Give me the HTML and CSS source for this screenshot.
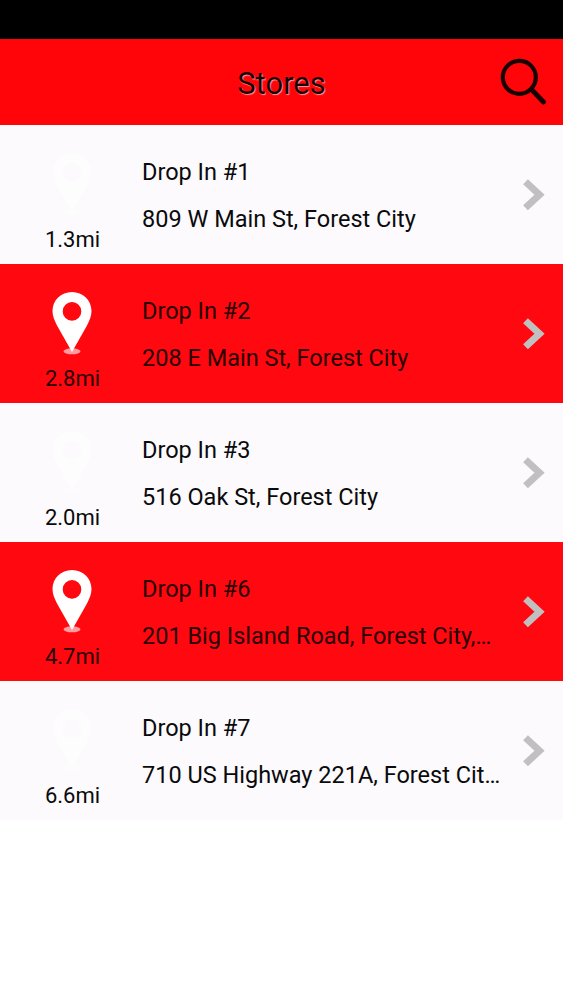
FILE: index.html
```html
<!DOCTYPE html>
<html lang="en">
<head>
    <meta charset="UTF-8">
    <meta name="viewport" content="width=device-width, initial-scale=1.0">
    <title>Stores</title>
    <link rel="stylesheet" href="styles.css">
</head>
<body>
    <svg class="symbols" width="0" height="0">
        <symbol id="pin" viewBox="0 0 40 64">
            <ellipse cx="20" cy="60.3" rx="8.5" ry="3" fill="#fff" fill-opacity="0.6"/>
            <path fill="#fff" fill-rule="evenodd" d="M20 1C9 1 .5 9.400 .5 20c0 5 2 9.500 4.500 14.500L20 61l15-26.500c2.500-5 4.500-9.500 4.500-14.500C39.500 9.400 31 1 20 1zm0 10.100a9.300 9.300 0 1 1 0 18.600 9.300 9.300 0 0 1 0-18.600z"/>
        </symbol>
        <symbol id="arrow" viewBox="0 0 22 32">
            <path d="M2.500 2.700L16.500 15.700 2.500 28.700" fill="none" stroke="#c1c0c1" stroke-width="7"/>
        </symbol>
    </svg>

    <div class="status-bar"></div>

    <header>
        <h1>Stores</h1>
        <svg class="search" viewBox="0 0 48 48" width="48" height="48">
            <circle cx="19.300" cy="19.300" r="16.500" fill="none" stroke="#180000" stroke-width="4.200"/>
            <path d="M31.500 31.500L43.500 44" stroke="#180000" stroke-width="4.800" stroke-linecap="round"/>
        </svg>
    </header>

    <ul class="store-list">
        <li class="store">
            <div class="distance">
                <svg class="pin"><use href="#pin"/></svg>
                <span>1.3mi</span>
            </div>
            <div class="info">
                <p>Drop In #1</p>
                <p>809 W Main St, Forest City</p>
            </div>
            <svg class="arrow"><use href="#arrow"/></svg>
        </li>
        <li class="store">
            <div class="distance">
                <svg class="pin"><use href="#pin"/></svg>
                <span>2.8mi</span>
            </div>
            <div class="info">
                <p>Drop In #2</p>
                <p>208 E Main St, Forest City</p>
            </div>
            <svg class="arrow"><use href="#arrow"/></svg>
        </li>
        <li class="store">
            <div class="distance">
                <svg class="pin"><use href="#pin"/></svg>
                <span>2.0mi</span>
            </div>
            <div class="info">
                <p>Drop In #3</p>
                <p>516 Oak St, Forest City</p>
            </div>
            <svg class="arrow"><use href="#arrow"/></svg>
        </li>
        <li class="store">
            <div class="distance">
                <svg class="pin"><use href="#pin"/></svg>
                <span>4.7mi</span>
            </div>
            <div class="info">
                <p>Drop In #6</p>
                <p>201 Big Island Road, Forest City,…</p>
            </div>
            <svg class="arrow"><use href="#arrow"/></svg>
        </li>
        <li class="store">
            <div class="distance">
                <svg class="pin"><use href="#pin"/></svg>
                <span>6.6mi</span>
            </div>
            <div class="info">
                <p>Drop In #7</p>
                <p>710 US Highway 221A, Forest Cit…</p>
            </div>
            <svg class="arrow"><use href="#arrow"/></svg>
        </li>
    </ul>
</body>
</html>
```

FILE: styles.css
```css
body {
    margin: 0;
    font-family: Roboto, sans-serif;
    background-color: #fff;
    color: #0a0a0c;
}

.symbols {
    display: block;
}

.status-bar {
    height: 39px;
    background-color: #000;
}

header {
    display: grid;
    grid-template-columns: 63px 1fr 63px;
    align-items: center;
    height: 86px;
    background-color: #ff0509;
}

h1 {
    grid-column: 2;
    margin: 0;
    padding-top: 4px;
    font-size: 31px;
    font-weight: 400;
    line-height: 36px;
    text-align: center;
    color: #180000;
    text-shadow: 1px 1px 1px rgba(255, 255, 255, 0.6);
}

.search {
    display: block;
}

.store-list {
    list-style-type: none;
    margin: 0;
    padding: 0;
}

.store {
    display: flex;
    box-sizing: border-box;
    height: 139px;
    padding-right: 18px;
    background-color: #fcfafc;
}

.store:nth-child(even) {
    background-color: #ff0810;
    color: #280003;
}

.distance {
    display: flex;
    flex-direction: column;
    align-items: center;
    width: 144px;
    padding-top: 27px;
    font-size: 22px;
    line-height: 26px;
}

.distance span {
    padding-left: 1px;
}

.pin {
    width: 40px;
    height: 64px;
    margin-bottom: 11px;
}

.store:nth-child(odd) .pin {
    opacity: 0.7;
}

.info {
    flex: 1;
    min-width: 0;
    margin-left: -2px;
    padding-top: 32px;
    font-size: 23.5px;
    line-height: 30px;
}

.info p {
    margin: 0 0 17px;
    white-space: nowrap;
}

.arrow {
    flex: none;
    align-self: center;
    width: 22px;
    height: 32px;
}
```
